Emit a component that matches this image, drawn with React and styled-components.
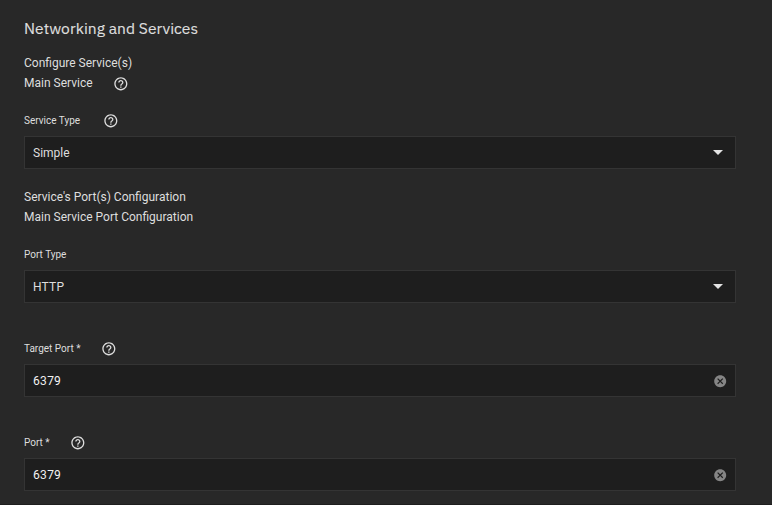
import React from "react";
import styled, { createGlobalStyle } from "styled-components";

const Global = createGlobalStyle`
  * { box-sizing: border-box; }
  body { margin: 0; background: #282828; }
`;

const Card = styled.main`
  display: flex;
  flex-direction: column;
  width: 772px;
  height: 505px;
  padding: 18px 36px 0 24px;
  background: #282828;
  border-bottom: 1px solid #1e1e1e;
  color: #dedede;
  font-family: Roboto, sans-serif;
  font-size: 12px;
  overflow: hidden;
`;

const Title = styled.h1`
  margin: 0 0 14px;
  height: 21px;
  font: 400 15.6px/21px "IBM Plex Sans", Roboto, sans-serif;
  letter-spacing: 0.04px;
  -webkit-text-stroke: 0.15px currentColor;
`;

const Line = styled.div`
  display: flex;
  align-items: center;
  gap: 20px;
  height: 20px;
`;

const Field = styled.section`
  display: flex;
  flex-direction: column;
  gap: 7px;
  margin-top: ${(p) => p.$top}px;
`;

const Label = styled.div`
  display: flex;
  align-items: flex-start;
  gap: ${(p) => p.$gap || 22}px;
  height: 16px;
  font-size: 10px;
  line-height: 15px;
`;

const Control = styled.div`
  display: flex;
  align-items: center;
  justify-content: space-between;
  height: 33px;
  padding: 0 8px;
  background: #1e1e1e;
  border: 1px solid #343434;
  font-size: 12px;
`;

const Value = styled.span`
  letter-spacing: ${(p) => p.$spacing || 0}px;
`;

const PortValue = styled.span`
  margin-bottom: 2px;
  color: #f2f2f2;
  font: 400 12px/18px "Roboto Mono", "Liberation Mono", monospace;
  letter-spacing: -0.25px;
`;

const Group = styled.div`
  margin-top: 18px;
`;

const Icon = styled.svg`
  flex: none;
  display: block;
  margin-top: ${(p) => p.$drop || 0}px;
`;

const Help = ({ drop }) => (
  <Icon $drop={drop} width="15.7" height="15.7" viewBox="0 0 24 24" fill="#dedede">
    <path d="M11 18h2v-2h-2v2zm1-16C6.48 2 2 6.48 2 12s4.48 10 10 10 10-4.48 10-10S17.52 2 12 2zm0 18c-4.41 0-8-3.59-8-8s3.59-8 8-8 8 3.59 8 8-3.59 8-8 8zm0-14c-2.21 0-4 1.79-4 4h2c0-1.1.9-2 2-2s2 .9 2 2c0 2-3 1.75-3 5h2c0-2.25 3-2.5 3-5 0-2.21-1.79-4-4-4z" />
  </Icon>
);

const Clear = () => (
  <Icon $drop={1} width="14.4" height="14.4" viewBox="0 0 24 24" fill="#858585">
    <path d="M12 2C6.47 2 2 6.47 2 12s4.47 10 10 10 10-4.47 10-10S17.53 2 12 2zm5 13.59L15.59 17 12 13.41 8.41 17 7 15.59 10.59 12 7 8.41 8.41 7 12 10.59 15.59 7 17 8.41 13.41 12 17 15.59z" />
  </Icon>
);

const Arrow = () => (
  <Icon width="18" height="5" viewBox="0 0 18 5" fill="#e4e4e4">
    <path d="M4 0h10L9 5z" />
  </Icon>
);

export default function App() {
  return (
    <Card>
      <Global />
      <Title>Networking and Services</Title>
      <Line>Configure Service(s)</Line>
      <Line>Main Service <Help drop={2} /></Line>
      <Field $top={20}>
        <Label $gap={23}>Service Type <Help /></Label>
        <Control><Value>Simple</Value><Arrow /></Control>
      </Field>
      <Group>
        <Line>Service's Port(s) Configuration</Line>
        <Line>Main Service Port Configuration</Line>
      </Group>
      <Field $top={20}>
        <Label>Port Type</Label>
        <Control><Value $spacing={0.2}>HTTP</Value><Arrow /></Control>
      </Field>
      <Field $top={38}>
        <Label $gap={20.5}>Target Port * <Help /></Label>
        <Control><PortValue>6379</PortValue><Clear /></Control>
      </Field>
      <Field $top={38}>
        <Label $gap={20.5}>Port * <Help /></Label>
        <Control><PortValue>6379</PortValue><Clear /></Control>
      </Field>
    </Card>
  );
}
